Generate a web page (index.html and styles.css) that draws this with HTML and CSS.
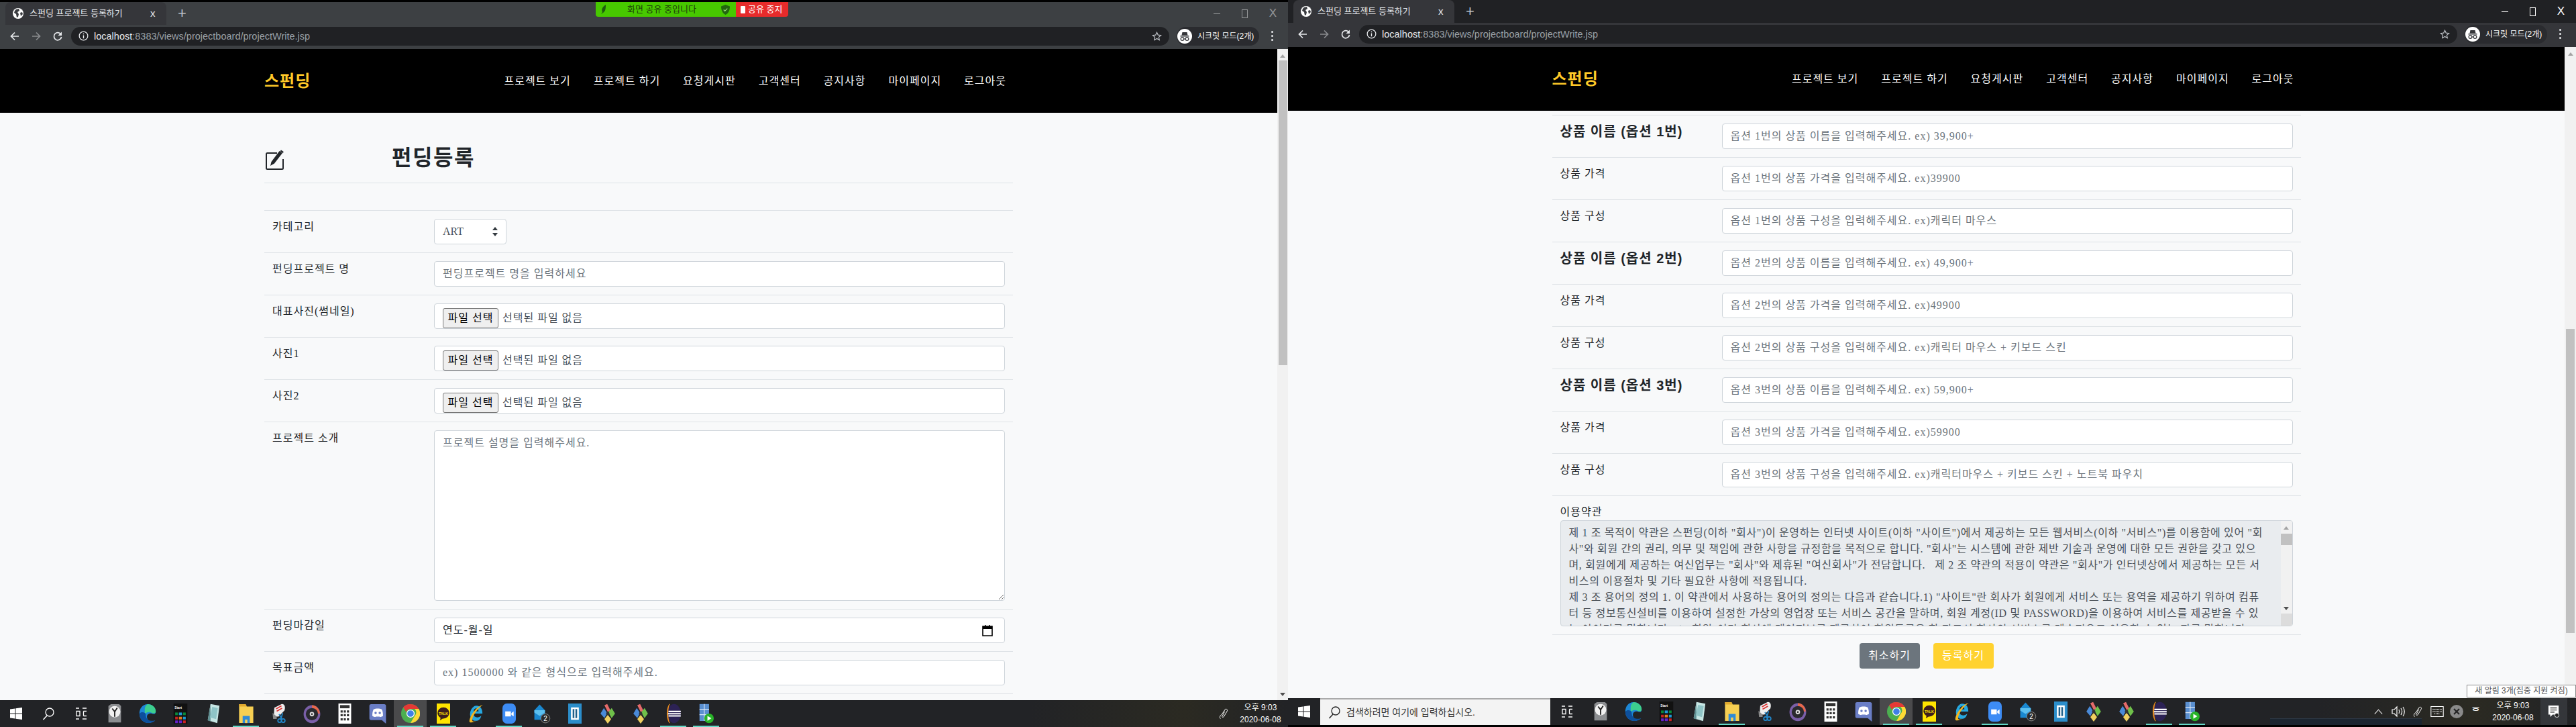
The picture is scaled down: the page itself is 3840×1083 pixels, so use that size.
FILE: index.html
```html
<!DOCTYPE html>
<html lang="ko">
<head>
    <meta charset="UTF-8">
    <title>스펀딩 프로젝트 등록하기</title>
    <link rel="stylesheet" href="styles.css">
</head>
<body>
    <!-- 아이콘 모음 -->
    <svg class="icon-defs" aria-hidden="true">
        <symbol id="i-globe" viewBox="0 0 16 16"><circle cx="8" cy="8" r="8" fill="#fff"/><path d="M5 2l4-1 1 3-3 2 2 3-1 4-2 1-1-5-3-2 1-3z" fill="#3a3c40"/><path d="M11 7l3-1 1 3-3 3z" fill="#3a3c40"/></symbol>
        <symbol id="i-back" viewBox="0 0 16 16"><path d="M14 8H3M8 2.5L2.5 8 8 13.5" fill="none" stroke="currentColor" stroke-width="1.7"/></symbol>
        <symbol id="i-forward" viewBox="0 0 16 16"><path d="M2 8h11M8 2.5L13.5 8 8 13.5" fill="none" stroke="currentColor" stroke-width="1.7"/></symbol>
        <symbol id="i-reload" viewBox="0 0 16 16"><path d="M13 5.5A5.6 5.6 0 1 0 13.6 9" fill="none" stroke="currentColor" stroke-width="1.7"/><path d="M14 1.5V7H8.5z" fill="currentColor"/></symbol>
        <symbol id="i-info" viewBox="0 0 16 16"><circle cx="8" cy="8" r="6.8" fill="none" stroke="currentColor" stroke-width="1.3"/><path d="M8 7v5M8 4v1.6" stroke="currentColor" stroke-width="1.5"/></symbol>
        <symbol id="i-star" viewBox="0 0 16 16"><path d="M8 1.8l1.9 4.2 4.6.5-3.4 3 .9 4.5L8 11.7 4 14l.9-4.5-3.4-3 4.6-.5z" fill="none" stroke="currentColor" stroke-width="1.3"/></symbol>
        <symbol id="i-spy" viewBox="0 0 22 22"><circle cx="11" cy="11" r="11" fill="#fff"/><path d="M7.5 5h7l1 4.5h-9zM4.5 10h13v1.4h-13z" fill="#35363a"/><circle cx="7.5" cy="15" r="2.4" fill="none" stroke="#35363a" stroke-width="1.2"/><circle cx="14.5" cy="15" r="2.4" fill="none" stroke="#35363a" stroke-width="1.2"/><path d="M9.8 15h2.4" stroke="#35363a"/></symbol>
        <symbol id="i-edit" viewBox="0 0 28 30"><path d="M17 5H2.5A1.5 1.5 0 0 0 1 6.500V27.500A1.500 1.500 0 0 0 2.500 29H24.500A1.500 1.500 0 0 0 26 27.500V14" fill="none" stroke="#212529" stroke-width="2"/><path d="M7 24l1.500-6L20.500 2l4.500 3-12 15.500z" fill="#212529"/><path d="M23 .5l4 2.800-1.500 1.700-4-2.800z" fill="#212529"/></symbol>
        <symbol id="i-calendar" viewBox="0 0 16 18"><path d="M1 3h14v14H1z" fill="none" stroke="#000" stroke-width="1.600"/><path d="M1 3h14v4H1zM4 1h1.500v3H4zM10.500 1H12v3h-1.500z" fill="#000"/></symbol>
        <symbol id="i-win" viewBox="0 0 20 20"><path d="M1 3.500l7.500-1v7H1zM9.500 2.300L19 1v8.500H9.500zM1 10.500h7.500v7l-7.500-1zM9.500 10.500H19V19l-9.500-1.300z" fill="#fff"/></symbol>
        <symbol id="i-search" viewBox="0 0 20 20"><circle cx="12" cy="8" r="6" fill="none" stroke="currentColor" stroke-width="1.300"/><path d="M8 13l-5.500 6" stroke="currentColor" stroke-width="1.500"/></symbol>
        <symbol id="i-taskview" viewBox="0 0 20 20"><path d="M2 2h5M12 2h6M2 18h5M12 18h6M3 6.500h5v7H3zM13.500 6.500H18M13.500 13.500H18M13.500 6.500v7" fill="none" stroke="#fff" stroke-width="1.300"/></symbol>
        <symbol id="i-clock" viewBox="0 0 26 32"><path d="M3 4l4-3h13l3 3v26H3z" fill="#8b8d90"/><circle cx="13" cy="13" r="9" fill="#f1f1f1"/><path d="M13 13l-4-5M13 13l4-6M13 13v8" stroke="#222" stroke-width="2"/></symbol>
        <symbol id="i-edge" viewBox="0 0 28 32"><path d="M14 1C6 1 1 8 1 16c0 9 7 15 14 15 5 0 9-2 11-4-6 3-13 1-13-6 0-5 5-6 8-5 3 1 6 1 6-3C27 6 21 1 14 1z" fill="#1d87d6"/><path d="M14 1c7 0 13 5 13 11 0 4-3 4-6 3-3-2-9-2-11 2C9 9 9 4 14 1z" fill="#3dcf8e"/><path d="M1 16C1 25 8 31 15 31c5 0 9-2 11-4-4 1-15 2-15-10 0-3-7-5-10-1z" fill="#0d4f9c"/></symbol>
        <symbol id="i-startmenu" viewBox="0 0 26 38"><path d="M0 0h26v38H0z" fill="#111"/><text x="2" y="10" class="icon-text">Start</text><path d="M3 17h5v5H3z" fill="#0a8a3a"/><path d="M10 17h6v5h-6z" fill="#1d9ad6"/><path d="M18 17h5v5h-5z" fill="#0a8a3a"/><path d="M3 25h5v5H3z" fill="#c22"/><path d="M10 25h6v5h-6z" fill="#e87a1d"/><path d="M18 25h5v5h-5z" fill="#1d9ad6"/><path d="M3 32h5v5H3z" fill="#62c"/><path d="M10 32h6v5h-6z" fill="#62c"/><path d="M18 32h5v5h-5z" fill="#c22"/></symbol>
        <symbol id="i-note" viewBox="0 0 24 36"><path d="M7 1l16 3-4 31-17-5z" fill="#c7e6e4"/><path d="M7 1L2 30l5 2z" fill="#5f8f92"/><path d="M10 6l10 2-3 20-11-3z" fill="#8fc4c6"/></symbol>
        <symbol id="i-folder" viewBox="0 0 26 34"><path d="M1 1h11l2 4h11v28H1z" fill="#f7cf52"/><path d="M1 1h11l2 4H1z" fill="#e0a92e"/><path d="M7 21h12v12H7z" fill="#2e8ad8"/><path d="M11 27h4v6h-4z" fill="#f7cf52"/></symbol>
        <symbol id="i-snip" viewBox="0 0 28 34"><path d="M6 7L18 1c6-1 7 6 5 11L13 22H5z" fill="#eee"/><path d="M9 9l9-5M10 13l9-5" stroke="#d33" stroke-width="2"/><path d="M3 16l7 6v4H4z" fill="#888"/><path d="M14 18l5 9M20 16l-3 11" stroke="#28c" stroke-width="2"/><circle cx="15" cy="29" r="3" fill="none" stroke="#28c" stroke-width="2"/><circle cx="21" cy="29" r="3" fill="none" stroke="#28c" stroke-width="2"/></symbol>
        <symbol id="i-disc" viewBox="0 0 28 36"><path d="M14 3a14 15 0 1 0 0 32 14 15 0 0 0 0-32z" fill="#7a5fa8"/><path d="M14 3A14 15 0 0 1 28 18h-5A9 10 0 0 0 14 8z" fill="#e8684a"/><circle cx="14" cy="19" r="11" fill="#2a2a2e"/><circle cx="14" cy="19" r="4" fill="#ddd"/><circle cx="14" cy="19" r="1.500" fill="#222"/></symbol>
        <symbol id="i-calc" viewBox="0 0 24 38"><path d="M0 0h24v38H0z" fill="#fff"/><path d="M3 3h18v6H3z" fill="#333"/><path d="M4 13h4v4H4zM10 13h4v4h-4zM16 13h4v4h-4zM4 20h4v4H4zM10 20h4v4h-4zM16 20h4v4h-4zM4 28h4v4H4zM10 28h4v4h-4zM16 28h4v4h-4z" fill="#333"/></symbol>
        <symbol id="i-discord" viewBox="0 0 28 34"><path d="M3 1h22a3 3 0 0 1 3 3v30l-7-6H3a3 3 0 0 1-3-3V4a3 3 0 0 1 3-3z" fill="#6a7ec6"/><path d="M7 10c4-2 10-2 14 0 2 4 2 8 2 11-3 2-5 2-6 1H11c-1 1-3 1-6-1 0-3 0-7 2-11z" fill="#fff"/><circle cx="10.500" cy="16" r="2" fill="#6a7ec6"/><circle cx="17.500" cy="16" r="2" fill="#6a7ec6"/></symbol>
        <symbol id="i-chrome" viewBox="0 0 32 32"><circle cx="16" cy="16" r="16" fill="#4caf50"/><path d="M16 0a16 16 0 0 1 14 8H16a8 8 0 0 0-7.500 5L3.500 5A16 16 0 0 1 16 0z" fill="#e53935"/><path d="M30 8a16 16 0 0 1-14 24l7-12a8 8 0 0 0 0-12z" fill="#fdd835"/><circle cx="16" cy="16" r="7" fill="#fff"/><circle cx="16" cy="16" r="5.500" fill="#3f7fe8"/></symbol>
        <symbol id="i-kakao" viewBox="0 0 24 36"><path d="M0 0h24v36H0z" fill="#ffe400"/><ellipse cx="12" cy="17" rx="10.500" ry="10" fill="#3c1e1e"/><path d="M7 25l-1 5 6-4z" fill="#3c1e1e"/><text x="3.500" y="20" class="icon-text icon-text-talk">TALK</text></symbol>
        <symbol id="i-ie" viewBox="0 0 28 36"><path d="M14 4c7 0 11 5 11 14H9c0 7 8 9 14 4-2 7-5 9-10 9C6 31 2 24 3 17 4 10 9 4 14 4zM9 14h9c0-7-8-7-9 0z" fill="#27a8e0"/><path d="M2 33C0 27 12 5 27 2c-8 3-22 22-20 29 1 2 4 1 7 0-5 3-10 4-12 2z" fill="#f2b620"/></symbol>
        <symbol id="i-zoom" viewBox="0 0 24 36"><rect width="24" height="36" rx="8" fill="#3d8cf5"/><path d="M5 14h10v9H5zM16 17l4-3v9l-4-3z" fill="#fff"/></symbol>
        <symbol id="i-mail" viewBox="0 0 36 42"><path d="M2 14L13 2l11 12v20H2z" fill="#1a88d0"/><path d="M2 14h22v5L13 26 2 19z" fill="#5cc0f0"/><circle cx="25" cy="31" r="9.500" fill="#2a2a2a" stroke="#aaa"/><text x="21" y="36" class="icon-text icon-text-num">2</text></symbol>
        <symbol id="i-box" viewBox="0 0 24 36"><path d="M0 0h24v36H0z" fill="#2b8ecb"/><path d="M5 7h14v22H5z" fill="#fff"/><path d="M8 10h8v16H8z" fill="#1d5f8a"/><path d="M11 10h2v16h-2z" fill="#fff"/></symbol>
        <symbol id="i-gem" viewBox="0 0 26 36"><path d="M13 15L7 3l5-2 6 12z" fill="#e56a6a"/><path d="M12 17L6 8 0 18l7 8z" fill="#4a8ad8"/><path d="M14 16l6-8 6 10-6 8z" fill="#6fc04a"/><path d="M13 20l6 8-6 8-6-8z" fill="#f0d060"/><circle cx="13" cy="18" r="3" fill="#333"/></symbol>
        <symbol id="i-eclipse" viewBox="0 0 26 36"><ellipse cx="14" cy="18" rx="12" ry="17" fill="#2c2255"/><path d="M6 1C0 8 0 28 6 35 2 28 2 8 6 1z" fill="#f7941e" stroke="#f7941e"/><path d="M4 13h22v2.500H4zM3 17h23v2.500H3zM4 21h22v2.500H4z" fill="#fff"/></symbol>
        <symbol id="i-video" viewBox="0 0 28 38"><path d="M1 1h18v32H1z" fill="#5a8fd0"/><path d="M1 11h18M1 21h18M10 1v32" stroke="#d6e4f4" stroke-width="1.500"/><circle cx="19" cy="28" r="9" fill="#28b428"/><path d="M16 23.500l7.500 4.500-7.500 4.500z" fill="#fff"/></symbol>
        <symbol id="i-pen" viewBox="0 0 18 26"><path d="M3 23c-3-3 0-7 3-9l6-9c2-2 5 0 4 3l-6 10c-1 2-3 3-4 1l5-10" fill="none" stroke="#fff" stroke-width="1.300"/></symbol>
        <symbol id="i-up" viewBox="0 0 16 10"><path d="M1 9l7-8 7 8" fill="none" stroke="#fff" stroke-width="1.400"/></symbol>
        <symbol id="i-speaker" viewBox="0 0 20 20"><path d="M1 7h3l4-4v14l-4-4H1z" fill="none" stroke="#fff" stroke-width="1.200"/><path d="M11 7c1 2 1 4 0 6M14 5c2 3 2 7 0 10M17 3c3 4 3 10 0 14" fill="none" stroke="#fff" stroke-width="1.200"/></symbol>
        <symbol id="i-keyboard" viewBox="0 0 24 20"><path d="M1 1h22v18H1z" fill="none" stroke="#fff" stroke-width="1.300"/><path d="M4 6h16M4 10h16M7 14h10" stroke="#fff" stroke-width="1.500" stroke-dasharray="1.500 1"/></symbol>
        <symbol id="i-xcircle" viewBox="0 0 20 20"><circle cx="10" cy="10" r="10" fill="#8a8a8a"/><path d="M6 6l8 8M14 6l-8 8" stroke="#222" stroke-width="2"/></symbol>
        <symbol id="i-notif" viewBox="0 0 20 22"><path d="M1 1h17v15H8l-4 4v-4H1z" fill="#fff"/><path d="M4 5h11M4 8.500h11M4 12h7" stroke="#222" stroke-width="1.200"/><circle cx="15" cy="17" r="3.500" fill="#222" stroke="#fff"/></symbol>
    </svg>

    <div class="desktop">
        <!-- 왼쪽 창 -->
        <section class="window window-left">
            <div class="share-bar">
                <div class="share-msg">
                    <svg class="share-leaf" viewBox="0 0 10 14"><path d="M8 0C3 3 1 7 3 11L1 14l3-2c4-2 4-8 4-12z" fill="#1d5c10"/></svg>
                    <span class="share-text">화면 공유 중입니다</span>
                    <svg class="share-shield" viewBox="0 0 14 16"><path d="M7 0l7 2.500c0 6-2 11-7 13.500C2 13.500 0 8.500 0 2.500z" fill="#22660f"/><path d="M4 8l2 2 4-4" fill="none" stroke="#a8e08a" stroke-width="1.200"/></svg>
                </div>
                <div class="share-stop"><i class="stop-box"></i>공유 중지</div>
            </div>

            <div class="tabstrip">
                <div class="tab">
                    <svg class="tab-globe"><use href="#i-globe"/></svg>
                    <span class="tab-title">스펀딩 프로젝트 등록하기</span>
                    <span class="tab-close">x</span>
                </div>
                <span class="tab-new">+</span>
                <div class="win-controls">
                    <span class="win-min"></span>
                    <span class="win-max"></span>
                    <span class="win-close">X</span>
                </div>
            </div>
            <div class="toolbar">
                <svg class="tool-icon"><use href="#i-back"/></svg>
                <svg class="tool-icon tool-off"><use href="#i-forward"/></svg>
                <svg class="tool-icon"><use href="#i-reload"/></svg>
                <div class="omnibox">
                    <svg class="omni-info"><use href="#i-info"/></svg>
                    <span class="url"><b>localhost</b>:8383/views/projectboard/projectWrite.jsp</span>
                    <svg class="omni-star"><use href="#i-star"/></svg>
                </div>
                <div class="profile">
                    <svg class="profile-spy"><use href="#i-spy"/></svg>
                    <span>시크릿 모드(2개)</span>
                </div>
                <div class="kebab"><i></i><i></i><i></i></div>
            </div>

            <div class="viewport">
                <div class="doc">
                    <header class="site-header">
                        <div class="wrap site-header-in">
                            <a class="logo">스펀딩</a>
                            <nav class="site-nav">
                                <a>프로젝트 보기</a><a>프로젝트 하기</a><a>요청게시판</a><a>고객센터</a><a>공지사항</a><a>마이페이지</a><a>로그아웃</a>
                            </nav>
                        </div>
                    </header>
                    <main class="wrap">
                        <div class="title-row">
                            <svg class="title-icon"><use href="#i-edit"/></svg>
                            <h2 class="title">펀딩등록</h2>
                        </div>
                        <table class="form-table form-table-first">
                            <tr>
                                <th>카테고리</th>
                                <td><div class="field field-select">ART<svg class="select-arrows" viewBox="0 0 8 14"><path d="M4 0l4 5H0zM4 14L0 9h8z" fill="#343a40"/></svg></div></td>
                            </tr>
                            <tr>
                                <th>펀딩프로젝트 명</th>
                                <td><input class="field" type="text" placeholder="펀딩프로젝트 명을 입력하세요"></td>
                            </tr>
                            <tr>
                                <th>대표사진(썸네일)</th>
                                <td><div class="field field-file"><span class="file-btn">파일 선택</span><span>선택된 파일 없음</span></div></td>
                            </tr>
                            <tr>
                                <th>사진1</th>
                                <td><div class="field field-file"><span class="file-btn">파일 선택</span><span>선택된 파일 없음</span></div></td>
                            </tr>
                            <tr>
                                <th>사진2</th>
                                <td><div class="field field-file"><span class="file-btn">파일 선택</span><span>선택된 파일 없음</span></div></td>
                            </tr>
                            <tr>
                                <th>프로젝트 소개</th>
                                <td><textarea class="field field-area" placeholder="프로젝트 설명을 입력해주세요."></textarea></td>
                            </tr>
                            <tr>
                                <th>펀딩마감일</th>
                                <td><div class="field field-date">연도-월-일<svg class="date-icon"><use href="#i-calendar"/></svg></div></td>
                            </tr>
                            <tr>
                                <th>목표금액</th>
                                <td><input class="field" type="text" placeholder="ex) 1500000 와 같은 형식으로 입력해주세요."></td>
                            </tr>
                            <tr><th></th><td></td></tr>
                        </table>
                    </main>
                </div>
                <div class="vscroll vscroll-left">
                    <span class="arrow-up"></span>
                    <div class="thumb"></div>
                    <span class="arrow-down"></span>
                </div>
            </div>

            <footer class="taskbar">
                <a class="task-sys"><svg><use href="#i-win"/></svg></a>
                <a class="task-sys"><svg class="white"><use href="#i-search"/></svg></a>
                <a class="task-sys task-view"><svg><use href="#i-taskview"/></svg></a>
                <a class="task"><svg><use href="#i-clock"/></svg></a>
                <a class="task"><svg><use href="#i-edge"/></svg></a>
                <a class="task"><svg><use href="#i-startmenu"/></svg></a>
                <a class="task"><svg><use href="#i-note"/></svg></a>
                <a class="task on"><svg><use href="#i-folder"/></svg></a>
                <a class="task"><svg><use href="#i-snip"/></svg></a>
                <a class="task"><svg><use href="#i-disc"/></svg></a>
                <a class="task"><svg><use href="#i-calc"/></svg></a>
                <a class="task"><svg><use href="#i-discord"/></svg></a>
                <a class="task on active"><svg><use href="#i-chrome"/></svg></a>
                <a class="task on"><svg><use href="#i-kakao"/></svg></a>
                <a class="task"><svg><use href="#i-ie"/></svg></a>
                <a class="task on"><svg><use href="#i-zoom"/></svg></a>
                <a class="task"><svg><use href="#i-mail"/></svg></a>
                <a class="task"><svg><use href="#i-box"/></svg></a>
                <a class="task"><svg><use href="#i-gem"/></svg></a>
                <a class="task"><svg><use href="#i-gem"/></svg></a>
                <a class="task on"><svg><use href="#i-eclipse"/></svg></a>
                <a class="task on"><svg><use href="#i-video"/></svg></a>
                <div class="tray">
                    <span class="tray-item"><svg class="tray-pen"><use href="#i-pen"/></svg></span>
                    <div class="tray-clock"><span>오후 9:03</span><span>2020-06-08</span></div>
                </div>
            </footer>
        </section>

        <!-- 오른쪽 창 -->
        <section class="window window-right">
            <div class="tabstrip">
                <div class="tab">
                    <svg class="tab-globe"><use href="#i-globe"/></svg>
                    <span class="tab-title">스펀딩 프로젝트 등록하기</span>
                    <span class="tab-close">x</span>
                </div>
                <span class="tab-new">+</span>
                <div class="win-controls">
                    <span class="win-min"></span>
                    <span class="win-max"></span>
                    <span class="win-close">X</span>
                </div>
            </div>
            <div class="toolbar">
                <svg class="tool-icon"><use href="#i-back"/></svg>
                <svg class="tool-icon tool-off"><use href="#i-forward"/></svg>
                <svg class="tool-icon"><use href="#i-reload"/></svg>
                <div class="omnibox">
                    <svg class="omni-info"><use href="#i-info"/></svg>
                    <span class="url"><b>localhost</b>:8383/views/projectboard/projectWrite.jsp</span>
                    <svg class="omni-star"><use href="#i-star"/></svg>
                </div>
                <div class="profile">
                    <svg class="profile-spy"><use href="#i-spy"/></svg>
                    <span>시크릿 모드(2개)</span>
                </div>
                <div class="kebab"><i></i><i></i><i></i></div>
            </div>

            <div class="viewport">
                <div class="doc">
                    <header class="site-header">
                        <div class="wrap site-header-in">
                            <a class="logo">스펀딩</a>
                            <nav class="site-nav">
                                <a>프로젝트 보기</a><a>프로젝트 하기</a><a>요청게시판</a><a>고객센터</a><a>공지사항</a><a>마이페이지</a><a>로그아웃</a>
                            </nav>
                        </div>
                    </header>
                    <main class="wrap">
                        <table class="form-table form-table-scrolled">
                            <tr>
                                <th class="th-big">상품 이름 (옵션 1번)</th>
                                <td><input class="field" type="text" placeholder="옵션 1번의 상품 이름을 입력해주세요. ex) 39,900+"></td>
                            </tr>
                            <tr>
                                <th>상품 가격</th>
                                <td><input class="field" type="text" placeholder="옵션 1번의 상품 가격을 입력해주세요. ex)39900"></td>
                            </tr>
                            <tr>
                                <th>상품 구성</th>
                                <td><input class="field" type="text" placeholder="옵션 1번의 상품 구성을 입력해주세요. ex)캐릭터 마우스"></td>
                            </tr>
                            <tr>
                                <th class="th-big">상품 이름 (옵션 2번)</th>
                                <td><input class="field" type="text" placeholder="옵션 2번의 상품 이름을 입력해주세요. ex) 49,900+"></td>
                            </tr>
                            <tr>
                                <th>상품 가격</th>
                                <td><input class="field" type="text" placeholder="옵션 2번의 상품 가격을 입력해주세요. ex)49900"></td>
                            </tr>
                            <tr>
                                <th>상품 구성</th>
                                <td><input class="field" type="text" placeholder="옵션 2번의 상품 구성을 입력해주세요. ex)캐릭터 마우스 + 키보드 스킨"></td>
                            </tr>
                            <tr>
                                <th class="th-big">상품 이름 (옵션 3번)</th>
                                <td><input class="field" type="text" placeholder="옵션 3번의 상품 이름을 입력해주세요. ex) 59,900+"></td>
                            </tr>
                            <tr>
                                <th>상품 가격</th>
                                <td><input class="field" type="text" placeholder="옵션 3번의 상품 가격을 입력해주세요. ex)59900"></td>
                            </tr>
                            <tr>
                                <th>상품 구성</th>
                                <td><input class="field" type="text" placeholder="옵션 3번의 상품 구성을 입력해주세요. ex)캐릭터마우스 + 키보드 스킨 + 노트북 파우치"></td>
                            </tr>
                            <tr>
                                <td class="terms-cell" colspan="2">
                                    <label class="terms-label">이용약관</label>
                                    <div class="terms">
                                        <div class="terms-text">
                                            <p>제 1 조 목적이 약관은 스펀딩(이하 "회사")이 운영하는 인터넷 사이트(이하 "사이트")에서 제공하는 모든 웹서비스(이하 "서비스")를 이용함에 있어 "회</p>
                                            <p>사"와 회원 간의 권리, 의무 및 책임에 관한 사항을 규정함을 목적으로 합니다. "회사"는 시스템에 관한 제반 기술과 운영에 대한 모든 권한을 갖고 있으</p>
                                            <p>며, 회원에게 제공하는 여신업무는 "회사"와 제휴된 "여신회사"가 전담합니다. &nbsp; 제 2 조 약관의 적용이 약관은 "회사"가 인터넷상에서 제공하는 모든 서</p>
                                            <p>비스의 이용절차 및 기타 필요한 사항에 적용됩니다.</p>
                                            <p>제 3 조 용어의 정의 1. 이 약관에서 사용하는 용어의 정의는 다음과 같습니다.1) "사이트"란 회사가 회원에게 서비스 또는 용역을 제공하기 위하여 컴퓨</p>
                                            <p>터 등 정보통신설비를 이용하여 설정한 가상의 영업장 또는 서비스 공간을 말하며, 회원 계정(ID 및 PASSWORD)을 이용하여 서비스를 제공받을 수 있</p>
                                            <p>는 아이디를 말합니다. 2) "회원"이란 회사에 개인정보를 제공하여 회원등록을 한 자로서 회사의 서비스를 계속적으로 이용할 수 있는 자를 말합니다.</p>
                                        </div>
                                        <div class="terms-scroll">
                                            <span class="arrow-up"></span>
                                            <div class="terms-thumb"></div>
                                            <span class="arrow-down"></span>
                                            <div class="terms-grip"></div>
                                        </div>
                                    </div>
                                </td>
                            </tr>
                            <tr>
                                <td class="btn-cell" colspan="2">
                                    <a class="btn btn-cancel">취소하기</a>
                                    <a class="btn btn-save">등록하기</a>
                                </td>
                            </tr>
                        </table>
                    </main>
                </div>
                <div class="vscroll vscroll-right">
                    <span class="arrow-up"></span>
                    <div class="thumb"></div>
                    <span class="arrow-down"></span>
                </div>
            </div>

            <footer class="taskbar">
                <a class="task-sys"><svg><use href="#i-win"/></svg></a>
                <div class="task-search">
                    <svg><use href="#i-search"/></svg>
                    <span>검색하려면 여기에 입력하십시오.</span>
                </div>
                <a class="task-sys task-view"><svg><use href="#i-taskview"/></svg></a>
                <a class="task"><svg><use href="#i-clock"/></svg></a>
                <a class="task"><svg><use href="#i-edge"/></svg></a>
                <a class="task"><svg><use href="#i-startmenu"/></svg></a>
                <a class="task"><svg><use href="#i-note"/></svg></a>
                <a class="task on"><svg><use href="#i-folder"/></svg></a>
                <a class="task"><svg><use href="#i-snip"/></svg></a>
                <a class="task"><svg><use href="#i-disc"/></svg></a>
                <a class="task"><svg><use href="#i-calc"/></svg></a>
                <a class="task"><svg><use href="#i-discord"/></svg></a>
                <a class="task on active"><svg><use href="#i-chrome"/></svg></a>
                <a class="task on"><svg><use href="#i-kakao"/></svg></a>
                <a class="task"><svg><use href="#i-ie"/></svg></a>
                <a class="task on"><svg><use href="#i-zoom"/></svg></a>
                <a class="task"><svg><use href="#i-mail"/></svg></a>
                <a class="task"><svg><use href="#i-box"/></svg></a>
                <a class="task"><svg><use href="#i-gem"/></svg></a>
                <a class="task"><svg><use href="#i-gem"/></svg></a>
                <a class="task on"><svg><use href="#i-eclipse"/></svg></a>
                <a class="task on"><svg><use href="#i-video"/></svg></a>
                <div class="tray">
                    <span class="tray-item tray-up"><svg><use href="#i-up"/></svg></span>
                    <span class="tray-item"><svg><use href="#i-speaker"/></svg></span>
                    <span class="tray-item"><svg class="tray-pen"><use href="#i-pen"/></svg></span>
                    <span class="tray-item"><svg><use href="#i-keyboard"/></svg></span>
                    <span class="tray-item"><svg><use href="#i-xcircle"/></svg></span>
                    <span class="tray-item tray-ime">ᅙ</span>
                    <div class="tray-clock"><span>오후 9:03</span><span>2020-06-08</span></div>
                    <span class="tray-notif"><svg><use href="#i-notif"/></svg></span>
                    <span class="show-desktop"></span>
                </div>
                <div class="task-popup"></div>
            </footer>
            <div class="tray-tooltip">새 알림 3개(집중 지원 켜짐)</div>
        </section>
    </div>
</body>
</html>
```
FILE: styles.css
```css
html, body {
    margin: 0;
    padding: 0;
    width: 3840px;
    height: 1083px;
    overflow: hidden;
    background: #000;
}
body {
    font-family: "Liberation Serif", "Noto Sans CJK KR", serif;
    font-size: 16px;
    line-height: 24px;
    color: #212529;
    letter-spacing: 1px;
}
.icon-defs {
    display: none;
}
.icon-text {
    font-family: "Liberation Sans", sans-serif;
    font-size: 6px;
    font-weight: 700;
    fill: #fff;
    letter-spacing: 0;
}
.icon-text-talk {
    font-size: 6.5px;
    fill: #ffe400;
}
.icon-text-num {
    font-size: 14px;
    font-weight: 400;
}

.desktop {
    display: flex;
    width: 3840px;
    height: 1083px;
}
.window {
    position: relative;
    width: 1920px;
    height: 1083px;
    display: flex;
    flex-direction: column;
    overflow: hidden;
}
.window-left {
    padding-top: 3px;
    box-sizing: border-box;
}
.window-right {
    padding-bottom: 3px;
    box-sizing: border-box;
}

/* chrome 탭 + 주소창 */
.tabstrip {
    height: 34px;
    display: flex;
    align-items: center;
    background: #202124;
    font-family: "Liberation Sans", "Noto Sans CJK KR", sans-serif;
    letter-spacing: 0;
    flex: none;
}
.window-left .tabstrip {
    background: #3d4043;
}
.tab {
    width: 240px;
    height: 34px;
    margin-left: 8px;
    background: #35363a;
    border-radius: 8px 8px 0 0;
    display: flex;
    align-items: center;
    box-sizing: border-box;
    color: #fff;
    font-size: 13px;
    flex: none;
}
.tab-globe {
    width: 16px;
    height: 16px;
    margin-left: 11px;
}
.tab-title {
    margin-left: 9px;
    width: 180px;
    color: #e8eaed;
}
.tab-close {
    color: #e8eaed;
    font-size: 15px;
}
.tab-new {
    margin-left: 17px;
    color: #bdc1c6;
    font-size: 22px;
}
.win-controls {
    margin-left: auto;
    display: flex;
    align-items: center;
    color: #fff;
    font-size: 17px;
}
.window-left .win-controls {
    opacity: .45;
}
.win-min {
    width: 10px;
    height: 1px;
    background: #fff;
    margin-right: 32px;
}
.win-max {
    width: 7px;
    height: 11px;
    border: 1px solid #fff;
    margin-right: 32px;
}
.win-close {
    margin-right: 17px;
    font-weight: 300;
}
.toolbar {
    height: 36px;
    display: flex;
    align-items: center;
    background: #35363a;
    color: #e8eaed;
    font-family: "Liberation Sans", "Noto Sans CJK KR", sans-serif;
    letter-spacing: 0;
    box-sizing: border-box;
    padding: 0 0 3px 14px;
    flex: none;
}
.window-left .toolbar {
    background: #3d4043;
}
.tool-icon {
    width: 16px;
    height: 18px;
    margin-right: 16px;
    color: #e8eaed;
}
.tool-off {
    color: #8a8c8f;
}
.omnibox {
    width: 1637px;
    height: 28px;
    margin-left: -4px;
    border-radius: 14px;
    background: #202124;
    display: flex;
    align-items: center;
    flex: none;
    box-sizing: border-box;
}
.omni-info {
    width: 15px;
    height: 15px;
    margin-left: 11px;
    color: #e8eaed;
}
.url {
    margin-left: 8px;
    font-size: 14.5px;
    color: #9aa0a6;
}
.url b {
    font-weight: 400;
    color: #e8eaed;
}
.omni-star {
    width: 15px;
    height: 16px;
    margin-left: auto;
    margin-right: 11px;
    color: #bdc1c6;
}
.profile {
    width: 123px;
    height: 28px;
    margin-left: 11px;
    border-radius: 14px;
    background: #2a2b2f;
    display: flex;
    align-items: center;
    font-size: 12px;
    color: #fff;
    flex: none;
    white-space: nowrap;
}
.profile-spy {
    width: 22px;
    height: 22px;
    margin: 0 8px 0 1px;
}
.kebab {
    margin-left: 18px;
    display: flex;
    flex-direction: column;
    gap: 3px;
}
.kebab i {
    width: 3px;
    height: 3px;
    border-radius: 50%;
    background: #e8eaed;
}

/* 화면 공유 */
.share-bar {
    position: absolute;
    top: 3px;
    left: 888px;
    height: 22px;
    display: flex;
    font-family: "Liberation Sans", "Noto Sans CJK KR", sans-serif;
    font-size: 13px;
    letter-spacing: 0;
    line-height: 20px;
    z-index: 5;
}
.share-msg {
    width: 209px;
    background: #47c800;
    border-radius: 0 0 0 4px;
    display: flex;
    align-items: center;
    color: #1d3c0c;
    position: relative;
}
.share-leaf {
    width: 10px;
    height: 14px;
    margin-left: 7px;
}
.share-text {
    margin-left: 30px;
}
.share-shield {
    width: 13px;
    height: 15px;
    margin-left: auto;
    margin-right: 9px;
}
.share-stop {
    width: 78px;
    background: #e62b2b;
    border-radius: 0 0 4px 0;
    color: #fff;
    display: flex;
    align-items: center;
    box-sizing: border-box;
    padding-left: 7px;
}
.stop-box {
    width: 7px;
    height: 11px;
    margin-right: 4px;
    background: #fff;
    border-radius: 1px;
}

/* 페이지 */
.viewport {
    flex: 1;
    display: flex;
    min-height: 0;
}
.doc {
    flex: 1;
    min-width: 0;
    background: #f8f9fa;
    overflow: hidden;
}
.wrap {
    display: block;
    width: 1116px;
    margin: 0 auto;
}
.site-header {
    background: #000;
    height: 95px;
}
.site-header-in {
    height: 95px;
    display: flex;
    align-items: center;
    justify-content: space-between;
}
.logo {
    font-family: "Liberation Sans", "Noto Sans CJK KR", sans-serif;
    font-size: 24px;
    font-weight: 700;
    color: #ffc928;
    margin-bottom: 0;
}
.site-nav {
    display: flex;
    gap: 34px;
    padding-right: 10px;
    color: #fff;
    font-size: 16px;
}
.title-row {
    height: 104px;
    border-bottom: 1px solid #dee2e6;
    box-sizing: content-box;
    display: flex;
    align-items: center;
}
.title-icon {
    width: 28px;
    height: 30px;
    margin: 36px 0 0 2px;
}
.title {
    margin: 30px 0 0 160px;
    font-family: "Liberation Sans", "Noto Sans CJK KR", sans-serif;
    font-size: 32px;
    line-height: 38px;
    font-weight: 700;
    letter-spacing: 1.6px;
}
.form-table {
    width: 1116px;
    border-collapse: collapse;
    table-layout: fixed;
}
.form-table-first {
    margin-top: 40px;
}
.form-table-scrolled {
    margin-top: 6px;
}
.form-table th,
.form-table td {
    padding: 12px;
    border-top: 1px solid #dee2e6;
    text-align: left;
    vertical-align: top;
    font-weight: 400;
}
.form-table th {
    width: 217px;
}
.form-table .th-big {
    font-size: 20px;
    font-weight: 700;
    font-family: "Liberation Sans", "Noto Sans CJK KR", sans-serif;
}
.field {
    display: block;
    width: 100%;
    height: 38px;
    margin: 0;
    box-sizing: border-box;
    padding: 6px 12px;
    background: #fff;
    border: 1px solid #ced4da;
    border-radius: 4px;
    font: inherit;
    letter-spacing: inherit;
    color: #495057;
    outline: none;
}
.field::placeholder {
    color: #6c757d;
    opacity: 1;
}
.field-area {
    height: 254px;
    resize: vertical;
}
.field-select {
    width: 108px;
    display: flex;
    align-items: center;
    justify-content: space-between;
    padding-right: 12px;
    letter-spacing: 0;
}
.select-arrows {
    width: 8px;
    height: 14px;
}
.field-file {
    display: flex;
    align-items: center;
    padding: 6px 12px 0;
    gap: 6px;
}
.file-btn {
    width: 83px;
    height: 30px;
    flex: none;
    box-sizing: border-box;
    background: #efefef;
    border: 1px solid #767676;
    border-radius: 3px;
    color: #000;
    text-align: center;
    line-height: 27px;
}
.field-date {
    display: flex;
    align-items: center;
    justify-content: space-between;
    color: #212529;
    padding-right: 17px;
}
.date-icon {
    width: 16px;
    height: 18px;
}

/* 이용약관 */
.form-table .terms-cell {
    padding-bottom: 12px;
}
.terms-label {
    display: block;
    height: 24px;
}
.terms {
    height: 158px;
    box-sizing: border-box;
    display: flex;
    background: #e9ecef;
    border: 1px solid #ced4da;
    border-radius: 4px;
    overflow: hidden;
    color: #495057;
}
.terms-text {
    flex: 1;
    min-width: 0;
    padding: 6px 12px;
    overflow: hidden;
    letter-spacing: .65px;
}
.terms-text p {
    margin: 0;
    white-space: nowrap;
}
.terms-scroll {
    width: 17px;
    flex: none;
    background: #f1f1f1;
    display: flex;
    flex-direction: column;
    align-items: center;
    padding-top: 8px;
}
.terms-thumb {
    width: 100%;
    height: 17px;
    margin: 6px 0 92px;
    background: #c1c1c1;
}
.terms-grip {
    width: 100%;
    height: 19px;
    margin-top: 5px;
    background: #dcdcdc;
}
.form-table .btn-cell {
    text-align: center;
}
.btn {
    display: inline-block;
    box-sizing: border-box;
    width: 90px;
    height: 38px;
    line-height: 36px;
    border: 1px solid transparent;
    border-radius: 4px;
    text-align: center;
    color: #fff;
}
.btn-cancel {
    background: #6c757d;
    margin-right: 15px;
}
.btn-save {
    background: #ffd22f;
}

/* 스크롤바 */
.vscroll {
    width: 17px;
    flex: none;
    background: #f1f1f1;
    display: flex;
    flex-direction: column;
    align-items: center;
    padding-top: 8px;
    box-sizing: border-box;
}
.vscroll .arrow-down {
    margin-top: auto;
    margin-bottom: 6px;
}
.vscroll .thumb {
    width: 13px;
    margin-top: 4px;
    background: #c1c1c1;
}
.vscroll-left .thumb {
    height: 454px;
}
.vscroll-right .thumb {
    margin-top: 407px;
    height: 453px;
}
.window-left .vscroll {
    width: 16px;
}
.arrow-up,
.arrow-down {
    width: 0;
    height: 0;
    flex: none;
    border-left: 4px solid transparent;
    border-right: 4px solid transparent;
}
.arrow-up {
    border-bottom: 5px solid #a3a3a3;
}
.arrow-down {
    border-top: 5px solid #505050;
}

/* 작업표시줄 */
.taskbar {
    height: 40px;
    flex: none;
    display: flex;
    align-items: stretch;
    position: relative;
    background: linear-gradient(90deg, #222326 0%, #222326 80%, #2b2a22 92%, #222326 100%);
    font-family: "Liberation Sans", "Noto Sans CJK KR", sans-serif;
    color: #fff;
    letter-spacing: 0;
}
.task-sys {
    width: 48px;
    flex: none;
    display: flex;
    align-items: center;
    justify-content: center;
    color: #fff;
}
.task-sys svg {
    width: 20px;
    height: 20px;
}
.task-view {
    width: 50px;
}
.task {
    position: relative;
    width: 49px;
    flex: none;
    display: flex;
    align-items: center;
    justify-content: center;
    box-sizing: border-box;
}
.task svg {
    width: 28px;
    height: 30px;
}
.task.on::after {
    content: "";
    position: absolute;
    left: 5px;
    right: 5px;
    bottom: 0;
    height: 2px;
    background: #63d8c6;
}
.task.active {
    background: #4a4a4c;
}
.task-search {
    width: 343px;
    flex: none;
    box-sizing: border-box;
    background: #f3f3f3;
    border-top: 2px solid #aaa;
    color: #333;
    display: flex;
    align-items: center;
    padding-left: 11px;
    font-size: 14px;
}
.task-search svg {
    width: 20px;
    height: 20px;
    margin-right: 8px;
    color: #222;
}
.tray {
    margin-left: auto;
    display: flex;
    align-items: center;
}
.tray-item {
    width: 29px;
    text-align: center;
    display: flex;
    justify-content: center;
    align-items: center;
}
.tray-item svg {
    width: 20px;
    height: 20px;
}
.tray-up svg {
    width: 13px;
    height: 9px;
}
.tray-pen {
    width: 18px;
    height: 24px;
}
.tray-ime {
    font-size: 16px;
}
.tray-clock {
    width: 82px;
    display: flex;
    flex-direction: column;
    align-items: center;
    font-size: 12px;
    line-height: 18px;
    box-sizing: border-box;
}
.tray-notif {
    width: 40px;
    height: 40px;
    background: #34363a;
    display: flex;
    align-items: center;
    justify-content: center;
}
.tray-notif svg {
    width: 18px;
    height: 20px;
}
.show-desktop {
    width: 13px;
}
.task-popup {
    position: absolute;
    left: 1464px;
    bottom: 0;
    width: 226px;
    height: 10px;
    background: #1b2530;
    border-top: 1px solid #2d3744;
    box-sizing: border-box;
}
.tray-tooltip {
    position: absolute;
    right: 0;
    bottom: 44px;
    width: 163px;
    height: 19px;
    box-sizing: border-box;
    background: #fff;
    border: 1px solid #8a8a8a;
    font-family: "Liberation Sans", "Noto Sans CJK KR", sans-serif;
    font-size: 12px;
    line-height: 17px;
    letter-spacing: 0;
    color: #555;
    text-align: center;
    white-space: nowrap;
}
```
